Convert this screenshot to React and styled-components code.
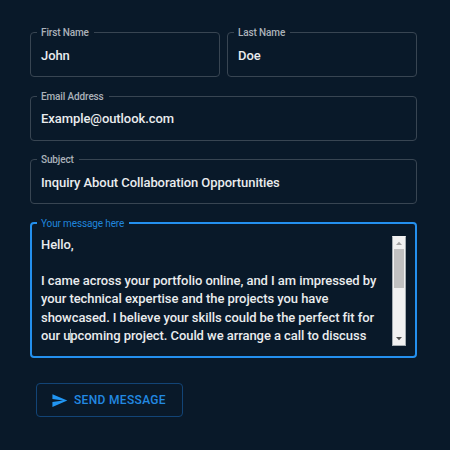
import React from "react";
import styled, { createGlobalStyle } from "styled-components";

const GlobalStyle = createGlobalStyle`
  * { box-sizing: border-box; }
  body { margin: 0; background: #091929; font-family: Roboto, sans-serif; }
`;

const Form = styled.main`
  width: 450px;
  height: 450px;
  padding: 26px 33px 0 30px;
  background: #091929;
  overflow: hidden;
`;

const Fields = styled.div`
  display: grid;
  grid-template-columns: 190px 190px;
  column-gap: 7px;
  row-gap: 12.5px;
`;

const Field = styled.fieldset`
  grid-column: ${(p) => (p.$half ? "auto" : "1 / -1")};
  min-width: 0;
  height: ${(p) => (p.$tall ? 141.5 : 51)}px;
  margin: 0;
  padding: 0 ${(p) => (p.$tall ? 9 : 10)}px;
  border: ${(p) => (p.$focused ? "2px solid #2490ee" : "1px solid #384552")};
  border-radius: 4px;
`;

const Label = styled.legend`
  height: 13px;
  margin-left: -4px;
  padding: 0 5px 0 4px;
  color: ${(p) => (p.$focused ? "#2085dc" : "#abb2b9")};
  font-size: 10px;
  font-weight: ${(p) => (p.$focused ? 400 : 500)};
  line-height: 13px;
  letter-spacing: -0.13px;
  white-space: nowrap;
`;

const Value = styled.div`
  padding-top: 6.9px;
  color: #e9ecee;
  font-size: 13px;
  font-weight: 500;
  line-height: 19px;
  letter-spacing: -0.07px;
  white-space: nowrap;
`;

const MessageArea = styled.div`
  display: flex;
  justify-content: space-between;
  height: 116px;
  padding-top: 6px;
`;

const Message = styled.div`
  color: #e9ecee;
  font-size: 13px;
  font-weight: 500;
  line-height: 18.25px;
  letter-spacing: -0.065px;
  white-space: pre;
`;

const Line = styled.div`
  display: flex;
  align-items: center;
  height: 18.25px;
`;

const Caret = styled.span`
  width: 1px;
  height: 14px;
  margin-right: -1px;
  background: #9ba3aa;
`;

const Scrollbar = styled.div`
  display: flex;
  flex-direction: column;
  width: 14px;
  height: 110px;
  border: 1px solid #a5adb2;
  border-top-color: #f1f1f1;
  background: #f1f1f1;
`;

const Arrow = styled.svg`
  display: block;
  width: 12px;
  height: 12px;
  fill: ${(p) => (p.$down ? "#505050" : "#a3a3a3")};
  margin-top: ${(p) => (p.$down ? "auto" : 0)};
`;

const Thumb = styled.div`
  width: 10px;
  height: 39px;
  margin: 0 1px;
  background: #c1c1c1;
`;

const SendButton = styled.button`
  display: flex;
  align-items: center;
  width: 147px;
  height: 34px;
  margin: 25px 0 0 6px;
  padding: 0 0 0 14px;
  gap: 6px;
  border: 1px solid #124476;
  border-radius: 4px;
  background: transparent;
  color: #2289e2;
  font: 500 12px/20px Roboto, sans-serif;
  letter-spacing: 0.33px;
  white-space: nowrap;
`;

const SendIcon = styled.svg`
  width: 17px;
  height: 17px;
  fill: #2196f3;
  flex: none;
`;

function TextField({ label, value, half }) {
  return (
    <Field $half={half}>
      <Label>{label}</Label>
      <Value>{value}</Value>
    </Field>
  );
}

export default function App() {
  return (
    <>
      <GlobalStyle />
      <Form>
        <Fields>
          <TextField label="First Name" value="John" half />
          <TextField label="Last Name" value="Doe" half />
          <TextField label="Email Address" value="Example@outlook.com" />
          <TextField label="Subject" value="Inquiry About Collaboration Opportunities" />
          <Field $tall $focused>
            <Label $focused>Your message here</Label>
            <MessageArea>
              <Message>
                <Line>Hello,</Line>
                <Line />
                <Line>I came across your portfolio online, and I am impressed by</Line>
                <Line>your technical expertise and the projects you have</Line>
                <Line>showcased. I believe your skills could be the perfect fit for</Line>
                <Line>
                  <span>our u</span>
                  <Caret />
                  <span>pcoming project. Could we arrange a call to discuss</span>
                </Line>
              </Message>
              <Scrollbar>
                <Arrow viewBox="0 0 12 12"><path d="M3 8 6 4.7 9 8Z" /></Arrow>
                <Thumb />
                <Arrow $down viewBox="0 0 12 12"><path d="M3 4h6L6 7.3Z" /></Arrow>
              </Scrollbar>
            </MessageArea>
          </Field>
        </Fields>
        <SendButton>
          <SendIcon viewBox="0 0 24 24"><path d="M2.01 21 23 12 2.01 3 2 10l15 2-15 2z" /></SendIcon>
          SEND MESSAGE
        </SendButton>
      </Form>
    </>
  );
}
